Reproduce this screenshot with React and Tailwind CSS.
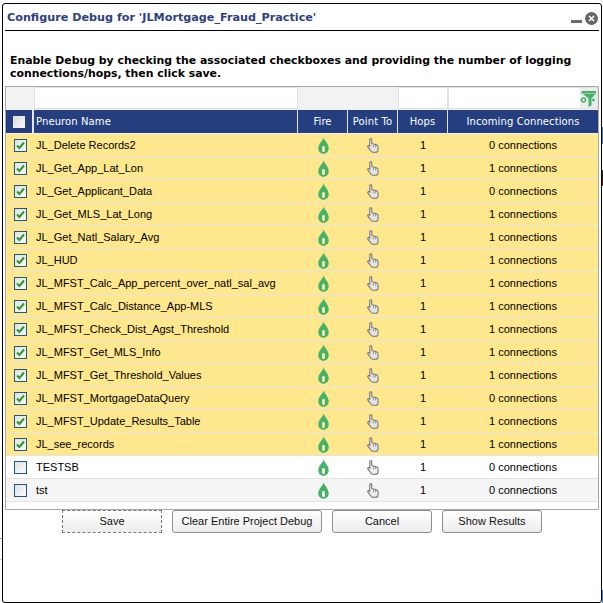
const rows = [
  ["JL_Delete Records2", 0, 1],
  ["JL_Get_App_Lat_Lon", 1, 1],
  ["JL_Get_Applicant_Data", 0, 1],
  ["JL_Get_MLS_Lat_Long", 1, 1],
  ["JL_Get_Natl_Salary_Avg", 1, 1],
  ["JL_HUD", 1, 1],
  ["JL_MFST_Calc_App_percent_over_natl_sal_avg", 1, 1],
  ["JL_MFST_Calc_Distance_App-MLS", 1, 1],
  ["JL_MFST_Check_Dist_Agst_Threshold", 1, 1],
  ["JL_MFST_Get_MLS_Info", 1, 1],
  ["JL_MFST_Get_Threshold_Values", 1, 1],
  ["JL_MFST_MortgageDataQuery", 0, 1],
  ["JL_MFST_Update_Results_Table", 1, 1],
  ["JL_see_records", 1, 1],
  ["TESTSB", 0, 0],
  ["tst", 0, 0],
];

function Flame({ on }) {
  return (
    <svg width="11" height="17" viewBox="0 0 11 17">
      <path d="M5.7 0.3 C5.9 3.5 10.7 6.3 10.7 11.2 C10.7 14.4 8.4 16.7 5.5 16.7 C2.6 16.7 0.3 14.4 0.3 11.2 C0.3 6.3 5.2 4 5.7 0.3 Z" fill="#45b268" />
      <rect x="4.2" y="9" width="2.6" height="6" rx="1.3" fill={on ? "#fdf3b8" : "#ffffff"} />
    </svg>
  );
}

function Hand({ on }) {
  return (
    <svg width="12" height="15" viewBox="0 0 13 16">
      <path
        d="M3 1.5 C3 0.3 5.2 0.3 5.2 1.5 L5.2 6 L9.5 7 C11 7.4 12 8.2 12 9.6 L12 12.5 C12 14 11 15.3 9.5 15.3 L6.2 15.3 C5.2 15.3 4.6 14.8 4.2 14 L1 9.8 C0.3 8.6 1.9 7.3 3 8.6 Z"
        fill={on ? "#e4e4e4" : "#eeeeee"}
        stroke={on ? "#747474" : "#6e6e6e"}
        strokeWidth="1.1"
      />
      <path d="M7 7 V10 M9.3 7.5 V10" stroke="#8e8e8e" strokeWidth="1" fill="none" />
    </svg>
  );
}

function Check({ on }) {
  return (
    <span className="flex h-[13px] w-[13px] items-center justify-center border border-[#1d5987] bg-gradient-to-br from-[#e2e2e2] to-[#fafafa]">
      {on ? (
        <svg width="9" height="9" viewBox="0 0 9 9">
          <path d="M1 4.5 L3.4 7 L8 1.5" fill="none" stroke="#2a9b2a" strokeWidth="2" />
        </svg>
      ) : null}
    </span>
  );
}

function FilterIcon() {
  return (
    <svg width="17" height="19" viewBox="0 0 17 19">
      <rect x="1.5" y="2" width="14.5" height="2.5" fill="#45b268" />
      <path d="M3 5 H15.5 L11.5 9.5 V16.5 L8.5 18 V9.5 Z" fill="#45b268" />
      <circle cx="3.5" cy="11" r="2" fill="none" stroke="#45b268" strokeWidth="1.6" />
      <circle cx="13.5" cy="11" r="1.4" fill="#45b268" />
    </svg>
  );
}

function Btn({ children, dashed, wide }) {
  return (
    <button
      className={
        "h-[23px] bg-gradient-to-b from-white to-[#ececec] text-[11px] text-[#111] " +
        (wide ? "w-[150px] " : "w-[100px] ") +
        (dashed ? "border border-dashed border-[#777]" : "rounded-[3px] border border-[#8f8f8f]")
      }
    >
      {children}
    </button>
  );
}

const cols = "grid grid-cols-[28px_264px_50px_50px_50px_150px]";

export default function App() {
  return (
    <div className="relative h-[603px] w-[603px] bg-white pl-[2px] pt-[3px] font-['Liberation_Sans',sans-serif]">
      <span className="absolute right-0 top-[127px] h-[17px] w-[1px] bg-[#3a80c0]" />
      <span className="absolute right-0 top-[170px] h-[9px] w-[1px] bg-[#222]" />
      <span className="absolute right-0 top-[179px] h-[7px] w-[1px] bg-[#6b1020]" />
      <span className="absolute right-0 top-[590px] h-[13px] w-[1px] bg-[#3a80c0]" />
      <span className="absolute left-0 top-[538px] h-[1px] w-[2px] bg-[#999]" />
      <span className="absolute left-0 top-[559px] h-[1px] w-[2px] bg-[#ccc]" />
      <div className="flex h-[600px] w-[600px] flex-col rounded-[3px] border border-black bg-white px-[2px]">
        <div className="flex h-[27px] items-center justify-between border-b border-black pl-[2px] pr-[1px] pt-[3px] font-['DejaVu_Sans',sans-serif] text-[11.2px] font-bold text-[#2d4080]">
          <span>Configure Debug for 'JLMortgage_Fraud_Practice'</span>
          <span className="flex items-center gap-[3px]">
            <span className="mt-[5px] h-[3px] w-[11px] bg-[#6b6b6b]" />
            <span className="flex h-[13px] w-[13px] items-center justify-center rounded-full bg-[#666] text-white">
              <svg width="7" height="7" viewBox="0 0 7 7">
                <path d="M1 1 L6 6 M6 1 L1 6" stroke="#fff" strokeWidth="1.6" />
              </svg>
            </span>
          </span>
        </div>
        <p className="mt-[23px] ml-[5px] font-['DejaVu_Sans',sans-serif] text-[10.9px] font-bold leading-[13px] text-black">
          Enable Debug by checking the associated checkboxes and providing the number of logging connections/hops, then click save.
        </p>
        <div className="mt-[6px] h-[424px] w-[594px] border border-[#a8a8a8] bg-white text-[11px] text-black">
          <div className={cols + " h-[22px] bg-[#f2f2f2]"}>
            <div />
            <div className="border border-[#e0e0e8] bg-white" />
            <div className="col-span-2" />
            <div className="border border-[#e0e0e8] bg-white" />
            <div className="flex justify-end border border-[#e0e0e8] bg-white">
              <span className="flex h-full w-[17px] items-center justify-center bg-[#ececec]">
                <FilterIcon />
              </span>
            </div>
          </div>
          <div className={cols + " h-[25px] border-y border-[#f0f0f0] bg-[#243e80] font-['DejaVu_Sans',sans-serif] text-[10px] tracking-[0.1px] text-white"}>
            <div className="flex items-center justify-center border-r-2 border-[#e4e4ec]">
              <span className="h-[12px] w-[12px] bg-gradient-to-br from-[#dcdcdc] to-[#f8f8f8]" />
            </div>
            <div className="flex items-center border-r border-[#e4e4ec] pl-[2px]">Pneuron Name</div>
            <div className="flex items-center justify-center border-r border-[#e4e4ec]">Fire</div>
            <div className="flex items-center justify-center border-r border-[#e4e4ec]">Point To</div>
            <div className="flex items-center justify-center border-r border-[#e4e4ec]">Hops</div>
            <div className="flex items-center justify-center">Incoming Connections</div>
          </div>
          {rows.map(([name, conn, on], i) => (
            <div
              key={name}
              className={
                cols +
                " h-[23px] items-center border-b border-[#e4e4e4] " +
                (on ? "bg-[#fee78d]" : i % 2 ? "bg-[#f5f5f5]" : "bg-white")
              }
            >
              <div className="flex justify-center">
                <Check on={!!on} />
              </div>
              <div className="pl-[2px]">{name}</div>
              <div className="flex justify-center">
                <Flame on={!!on} />
              </div>
              <div className="flex justify-center">
                <Hand on={!!on} />
              </div>
              <div className="text-center">1</div>
              <div className="text-center">{conn} connections</div>
            </div>
          ))}
        </div>
        <div className="ml-[57px] flex gap-[10px]">
          <Btn dashed>Save</Btn>
          <Btn wide>Clear Entire Project Debug</Btn>
          <Btn>Cancel</Btn>
          <Btn>Show Results</Btn>
        </div>
      </div>
    </div>
  );
}
